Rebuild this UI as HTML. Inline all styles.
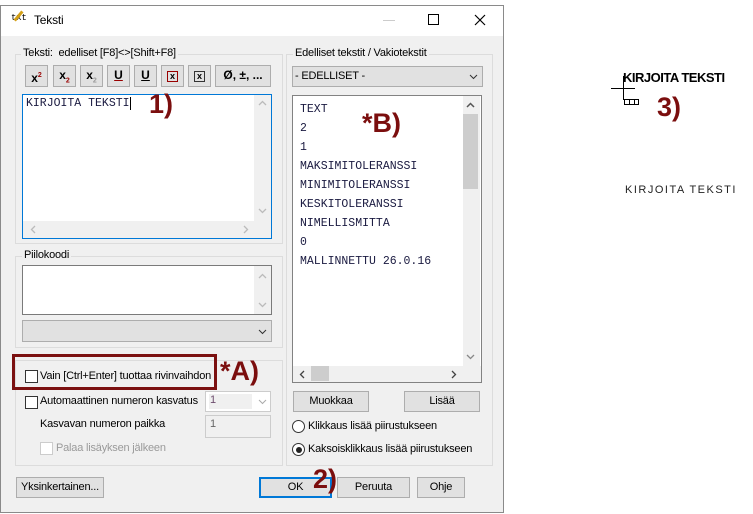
<!DOCTYPE html>
<html><head><meta charset="utf-8"><style>
*{box-sizing:border-box;margin:0;padding:0}
body{width:753px;height:514px;background:#fff;position:relative;overflow:hidden;font-family:"Liberation Sans",sans-serif;font-size:11px;letter-spacing:-0.2px;color:#000}
.a{position:absolute}
.win{left:0;top:5px;width:504px;height:508px;border:1px solid #8a8a8a;background:#f0f0f0}
.title{left:1px;top:6px;width:502px;height:30px;background:#fff}
.grp{border:1px solid #dcdcdc}
.lbl{background:#f0f0f0;padding:0 2px;font-size:11px;line-height:13px}
.tb{top:65px;height:22px;background:#e1e1e1;border:1px solid #adadad;font-weight:bold;font-size:12px;text-align:center;line-height:19px;letter-spacing:0}
.btn{background:#e1e1e1;border:1px solid #adadad;text-align:center;line-height:19px;font-size:11px}
.cb{width:13px;height:13px;border:1px solid #333;background:#fff}
.red{color:#7b0e0e;font-weight:bold;font-size:27px;line-height:27px;letter-spacing:0}
.mono{font-family:"Liberation Mono",monospace;font-size:11.5px;color:#1a1a40;letter-spacing:0}
svg{position:absolute}
</style></head><body>
<div class="a win"></div>
<div class="a title"></div>
<div class="a" style="left:11px;top:13px;font-size:9px;font-family:'Liberation Mono'">txt</div>
<div class="a" style="left:17px;top:10px;width:3px;height:12px;background:#d4a017;transform:rotate(40deg)"></div>
<div class="a" style="left:34px;top:13px;font-size:12px">Teksti</div>
<div class="a" style="left:383px;top:20px;width:12px;height:1px;background:#ccc"></div>
<div class="a" style="left:428px;top:14px;width:11px;height:11px;border:1px solid #000"></div>
<svg style="left:474px;top:14px" width="12" height="12"><path d="M1 1L11 11M11 1L1 11" stroke="#000" stroke-width="1.2"/></svg>

<!-- left group 1 -->
<div class="a grp" style="left:15px;top:54px;width:268px;height:190px"></div>
<div class="a lbl" style="left:21px;top:47px">Teksti:&nbsp; edelliset [F8]&lt;&gt;[Shift+F8]</div>
<div class="a tb" style="left:25px;width:23px">x<sup style="color:#900;font-size:7px">2</sup></div>
<div class="a tb" style="left:53px;width:23px">x<sub style="color:#900;font-size:7px">2</sub></div>
<div class="a tb" style="left:80px;width:23px">x<sub style="color:#999;font-size:7px">2</sub></div>
<div class="a tb" style="left:107px;width:23px;text-decoration:underline;text-decoration-color:#900">U</div>
<div class="a tb" style="left:134px;width:23px;text-decoration:underline">U</div>
<div class="a tb" style="left:161px;width:23px"><span style="display:inline-block;width:11px;height:11px;border:1px solid #900;font-size:9px;line-height:9px">x</span></div>
<div class="a tb" style="left:188px;width:23px"><span style="display:inline-block;width:11px;height:11px;border:1px solid #333;font-size:9px;line-height:9px">x</span></div>
<div class="a tb" style="left:215px;width:56px">Ø, ±, ...</div>
<div class="a" style="left:22px;top:94px;width:250px;height:145px;border:1px solid #0078d7;background:#fff"></div>
<div class="a" style="left:254px;top:95px;width:17px;height:126px;background:#f0f0f0"></div>
<div class="a" style="left:23px;top:221px;width:248px;height:17px;background:#f0f0f0"></div>
<svg style="left:258px;top:100px" width="9" height="6"><path d="M1 5L4.5 1.5L8 5" stroke="#bbb" fill="none" stroke-width="1.3"/></svg>
<svg style="left:258px;top:208px" width="9" height="6"><path d="M1 1L4.5 4.5L8 1" stroke="#bbb" fill="none" stroke-width="1.3"/></svg>
<svg style="left:30px;top:225px" width="6" height="9"><path d="M5 1L1.5 4.5L5 8" stroke="#bbb" fill="none" stroke-width="1.3"/></svg>
<svg style="left:243px;top:225px" width="6" height="9"><path d="M1 1L4.5 4.5L1 8" stroke="#bbb" fill="none" stroke-width="1.3"/></svg>
<div class="a mono" style="left:26px;top:97px">KIRJOITA TEKSTI<span style="border-left:1px solid #000"></span></div>
<div class="a red" style="left:149px;top:91px">1)</div>

<!-- piilokoodi -->
<div class="a grp" style="left:15px;top:256px;width:268px;height:92px"></div>
<div class="a lbl" style="left:22px;top:249px">Piilokoodi</div>
<div class="a" style="left:22px;top:265px;width:250px;height:50px;border:1px solid #7a7a7a;background:#fff"></div>
<div class="a" style="left:254px;top:266px;width:17px;height:48px;background:#f0f0f0"></div>
<svg style="left:258px;top:273px" width="9" height="6"><path d="M1 5L4.5 1.5L8 5" stroke="#bbb" fill="none" stroke-width="1.3"/></svg>
<svg style="left:258px;top:302px" width="9" height="6"><path d="M1 1L4.5 4.5L8 1" stroke="#bbb" fill="none" stroke-width="1.3"/></svg>
<div class="a" style="left:22px;top:320px;width:250px;height:22px;border:1px solid #adadad;background:#e1e1e1"></div>
<svg style="left:258px;top:329px" width="9" height="6"><path d="M1 1L4.5 4.5L8 1" stroke="#333" fill="none" stroke-width="1"/></svg>

<!-- lower group -->
<div class="a grp" style="left:15px;top:360px;width:268px;height:106px"></div>
<div class="a" style="left:12px;top:354px;width:205px;height:36px;border:3px solid #7b1010"></div>
<div class="a cb" style="left:25px;top:370px"></div>
<div class="a" style="left:40px;top:370px">Vain [Ctrl+Enter] tuottaa rivinvaihdon</div>
<div class="a red" style="left:220px;top:358px">*A)</div>
<div class="a cb" style="left:25px;top:396px"></div>
<div class="a" style="left:40px;top:395px">Automaattinen numeron kasvatus</div>
<div class="a" style="left:205px;top:391px;width:66px;height:21px;border:1px solid #ccc;background:#fff"></div>
<div class="a" style="left:209px;top:394px;width:43px;height:15px;background:#f0f0f0;color:#6d4c6d;padding-left:1px">1</div>
<svg style="left:258px;top:399px" width="9" height="6"><path d="M1 1L4.5 4.5L8 1" stroke="#aaa" fill="none" stroke-width="1"/></svg>
<div class="a" style="left:40px;top:418px">Kasvavan numeron paikka</div>
<div class="a" style="left:205px;top:415px;width:66px;height:23px;border:1px solid #ccc;background:#f0f0f0;padding:2px 4px;color:#666">1</div>
<div class="a cb" style="left:40px;top:442px;border-color:#ccc"></div>
<div class="a" style="left:56px;top:442px;color:#9a9a9a">Palaa lisäyksen jälkeen</div>

<!-- right group -->
<div class="a grp" style="left:286px;top:54px;width:207px;height:412px"></div>
<div class="a lbl" style="left:293px;top:47px">Edelliset tekstit / Vakiotekstit</div>
<div class="a" style="left:292px;top:66px;width:191px;height:21px;border:1px solid #adadad;background:#e1e1e1;padding:3px 2px">- EDELLISET -</div>
<svg style="left:469px;top:74px" width="9" height="6"><path d="M1 1L4.5 4.5L8 1" stroke="#333" fill="none" stroke-width="1"/></svg>
<div class="a" style="left:292px;top:95px;width:190px;height:288px;border:1px solid #828282;background:#fff"></div>
<div class="a" style="left:463px;top:96px;width:17px;height:270px;background:#f0f0f0"></div>
<div class="a" style="left:463px;top:114px;width:15px;height:75px;background:#cdcdcd"></div>
<div class="a" style="left:293px;top:366px;width:188px;height:16px;background:#f0f0f0"></div>
<div class="a" style="left:311px;top:366px;width:18px;height:15px;background:#cdcdcd"></div>
<svg style="left:466px;top:102px" width="9" height="6"><path d="M1 5L4.5 1.5L8 5" stroke="#555" fill="none" stroke-width="1.5"/></svg>
<svg style="left:466px;top:354px" width="9" height="6"><path d="M1 1L4.5 4.5L8 1" stroke="#888" fill="none" stroke-width="1.3"/></svg>
<svg style="left:299px;top:370px" width="6" height="9"><path d="M5 1L1.5 4.5L5 8" stroke="#444" fill="none" stroke-width="1.3"/></svg>
<svg style="left:451px;top:370px" width="6" height="9"><path d="M1 1L4.5 4.5L1 8" stroke="#444" fill="none" stroke-width="1.3"/></svg>
<div class="a mono" style="left:300px;top:100px;line-height:19px">TEXT<br>2<br>1<br>MAKSIMITOLERANSSI<br>MINIMITOLERANSSI<br>KESKITOLERANSSI<br>NIMELLISMITTA<br>0<br>MALLINNETTU 26.0.16</div>
<div class="a red" style="left:362px;top:110px">*B)</div>
<div class="a btn" style="left:293px;top:391px;width:76px;height:21px">Muokkaa</div>
<div class="a btn" style="left:404px;top:391px;width:76px;height:21px">Lisää</div>
<div class="a" style="left:292px;top:420px;width:13px;height:13px;border:1px solid #333;border-radius:50%;background:#fff"></div>
<div class="a" style="left:308px;top:420px">Klikkaus lisää piirustukseen</div>
<div class="a" style="left:292px;top:443px;width:13px;height:13px;border:1px solid #333;border-radius:50%;background:#fff"></div>
<div class="a" style="left:295.5px;top:446.5px;width:6px;height:6px;border-radius:50%;background:#222"></div>
<div class="a" style="left:308px;top:443px">Kaksoisklikkaus lisää piirustukseen</div>

<!-- bottom buttons -->
<div class="a btn" style="left:16px;top:477px;width:88px;height:21px">Yksinkertainen...</div>
<div class="a btn" style="left:259px;top:477px;width:73px;height:21px;border:2px solid #0078d7;line-height:17px">OK</div>
<div class="a red" style="left:313px;top:466px">2)</div>
<div class="a btn" style="left:337px;top:477px;width:73px;height:21px">Peruuta</div>
<div class="a btn" style="left:417px;top:477px;width:48px;height:21px">Ohje</div>

<!-- drawing area -->
<div class="a" style="left:623px;top:71px;font-size:13px;letter-spacing:-0.5px;line-height:13px;font-weight:bold">KIRJOITA TEKSTI</div>
<div class="a" style="left:611px;top:88px;width:24px;height:1px;background:#000"></div>
<div class="a" style="left:623px;top:76px;width:1px;height:24px;background:#000"></div>
<div class="a" style="left:624px;top:99px;width:15px;height:6px;border:1px solid #000;background:linear-gradient(90deg,transparent 4px,#000 4px,#000 5px,transparent 5px,transparent 9px,#000 9px,#000 10px,transparent 10px)"></div>
<div class="a red" style="left:657px;top:94px">3)</div>
<div class="a" style="left:625px;top:184px;font-size:11px;letter-spacing:1.5px;color:#222">KIRJOITA TEKSTI</div>
</body></html>
